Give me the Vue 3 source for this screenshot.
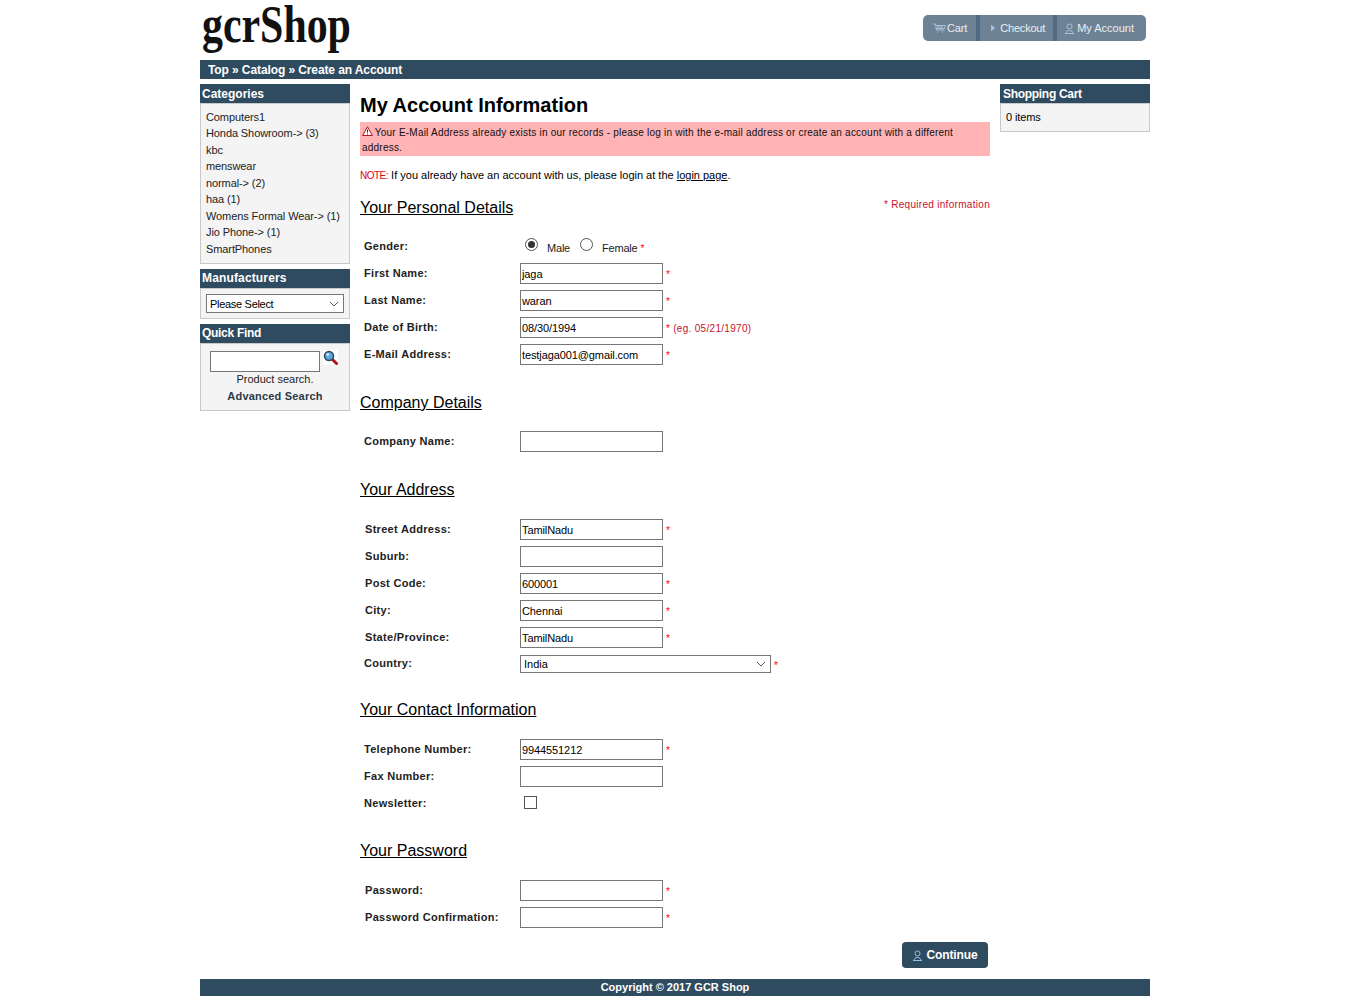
<template>
  <div class="page">
    <header class="top">
      <a class="logo"><span>gcrShop</span></a>
      <nav class="topnav">
        <a class="topnav-item cart-link">
          <svg width="13" height="10" viewBox="0 0 13 10" fill="none" stroke="#a9c3d6" stroke-width="1"><path d="M0 1h2.5l1 6h8M3 2.5h9.5l-1 3H3.5M5 2.5v3M7 2.5v3M9 2.5v3"/><path d="M4 9h1M9 9h1"/></svg>
          Cart
        </a>
        <a class="topnav-item checkout-link">
          <svg width="8" height="10" viewBox="0 0 8 10"><path d="M2 1.5l4 3.5-4 3.5z" fill="#a9c3d6"/></svg>
          Checkout
        </a>
        <a class="topnav-item account-link">
          <svg width="11" height="11" viewBox="0 0 11 11" fill="none" stroke="#a9c3d6"><circle cx="5.5" cy="3.5" r="2.5"/><path d="M1 10.5h9M2 10.5c0-2 1.5-3 3.5-3s3.5 1 3.5 3"/></svg>
          My Account
        </a>
      </nav>
    </header>

    <div class="crumbs">Top » Catalog » Create an Account</div>

    <div class="columns">
      <aside class="side">
        <section class="box">
          <h3 class="box-title">Categories</h3>
          <ul class="box-body cats">
            <li v-for="c in categories" :key="c">{{ c }}</li>
          </ul>
        </section>
        <section class="box">
          <h3 class="box-title wide raised">Manufacturers</h3>
          <div class="box-body manu">
            <select class="select manu-select"><option>Please Select</option></select>
          </div>
        </section>
        <section class="box">
          <h3 class="box-title tight raised">Quick Find</h3>
          <div class="box-body find">
            <div class="find-row">
              <input class="find-input" type="text" />
              <svg class="find-icon" width="15" height="15" viewBox="0 0 15 15">
                <path d="M9 9l4.5 4.5" stroke="#b3121d" stroke-width="3" stroke-linecap="round"/>
                <circle cx="6" cy="6" r="4.5" fill="#5aa5e0" stroke="#33475b" stroke-width="1.5"/>
                <circle cx="4.8" cy="4.6" r="1.4" fill="#d7edfb"/>
              </svg>
            </div>
            <div class="find-text">Product search.</div>
            <div class="adv">Advanced Search</div>
          </div>
        </section>
      </aside>

      <main class="main">
        <h1 class="title">My Account Information</h1>
        <div class="alert">
          <svg class="alert-icon" width="11" height="10" viewBox="0 0 11 10" fill="#fff" stroke="#b3121d"><path d="M5.5 .8L10.4 9.5H.6z"/><path d="M5.5 3.5v3.2M5.5 7.5v1" stroke="#333"/></svg>
          Your E-Mail Address already exists in our records - please log in with the e-mail address or create an account with a different address.
        </div>
        <p class="note"><span class="red">NOTE:</span> If you already have an account with us, please login at the <u>login page</u>.</p>

        <div class="head-row">
          <h2 class="heading">Your Personal Details</h2>
          <span class="required">* Required information</span>
        </div>
        <div class="row gender">
          <label class="lbl">Gender:</label>
          <div class="radios">
            <span class="radio on"></span><span class="radio-text">Male</span>
            <span class="radio"></span><span class="radio-text">Female <i class="star">*</i></span>
          </div>
        </div>
        <div v-for="f in personal" :key="f.label" class="row">
          <label class="lbl">{{ f.label }}</label>
          <input class="input" type="text" :value="f.value" />
          <i class="star">*</i><span v-if="f.hint" class="hint">{{ f.hint }}</span>
        </div>

        <h2 class="heading next company-head">Company Details</h2>
        <div class="row">
          <label class="lbl">Company Name:</label>
          <input class="input" type="text" />
        </div>

        <h2 class="heading next">Your Address</h2>
        <div v-for="f in address" :key="f.label" class="row shifted">
          <label class="lbl">{{ f.label }}</label>
          <input class="input" type="text" :value="f.value" />
          <i v-if="f.req" class="star">*</i>
        </div>
        <div class="row country">
          <label class="lbl">Country:</label>
          <select class="select country-select"><option>India</option></select>
          <i class="star">*</i>
        </div>

        <h2 class="heading next snug">Your Contact Information</h2>
        <div class="row">
          <label class="lbl">Telephone Number:</label>
          <input class="input" type="text" value="9944551212" />
          <i class="star">*</i>
        </div>
        <div class="row">
          <label class="lbl">Fax Number:</label>
          <input class="input" type="text" />
        </div>
        <div class="row">
          <label class="lbl">Newsletter:</label>
          <span class="check"></span>
        </div>

        <h2 class="heading next snug">Your Password</h2>
        <div class="row shifted">
          <label class="lbl">Password:</label>
          <input class="input" type="password" />
          <i class="star">*</i>
        </div>
        <div class="row shifted">
          <label class="lbl">Password Confirmation:</label>
          <input class="input" type="password" />
          <i class="star">*</i>
        </div>

        <div class="actions">
          <button class="continue" type="button">
            <svg width="11" height="11" viewBox="0 0 11 11" fill="none" stroke="#8fc3ea"><circle cx="5.5" cy="3.5" r="2.5"/><path d="M1 10.5h9M2 10.5c0-2 1.5-3 3.5-3s3.5 1 3.5 3"/></svg>
            Continue
          </button>
        </div>
      </main>

      <aside class="side">
        <section class="box">
          <h3 class="box-title tight cart-title">Shopping Cart</h3>
          <div class="box-body cart">0 items</div>
        </section>
      </aside>
    </div>

    <footer class="foot">Copyright © 2017 GCR Shop</footer>
  </div>
</template>

<script setup>
const categories = [
  'Computers1',
  'Honda Showroom-> (3)',
  'kbc',
  'menswear',
  'normal-> (2)',
  'haa (1)',
  'Womens Formal Wear-> (1)',
  'Jio Phone-> (1)',
  'SmartPhones',
]

const personal = [
  { label: 'First Name:', value: 'jaga' },
  { label: 'Last Name:', value: 'waran' },
  { label: 'Date of Birth:', value: '08/30/1994', hint: '(eg. 05/21/1970)' },
  { label: 'E-Mail Address:', value: 'testjaga001@gmail.com' },
]

const address = [
  { label: 'Street Address:', value: 'TamilNadu', req: true },
  { label: 'Suburb:', value: '' },
  { label: 'Post Code:', value: '600001', req: true },
  { label: 'City:', value: 'Chennai', req: true },
  { label: 'State/Province:', value: 'TamilNadu', req: true },
]
</script>

<style>
html, body { background: #fff; }
</style>

<style scoped>
.page {
  width: 950px;
  margin-left: 200px;
  font-family: "Liberation Sans", Arial, sans-serif;
  font-size: 11px;
  color: #000;
  letter-spacing: 0.3px;
}

/* header */
.top {
  height: 60px;
  display: flex;
  justify-content: space-between;
  align-items: flex-start;
}
.logo {
  display: block;
  width: 200px;
  height: 60px;
}
.logo span {
  display: block;
  font-family: "Liberation Serif", serif;
  font-size: 53px;
  font-weight: bold;
  line-height: 48px;
  letter-spacing: 0;
  transform: scaleX(0.79);
  transform-origin: 0 0;
  white-space: nowrap;
  color: #111;
  margin-left: 2px;
}
.topnav {
  display: flex;
  margin: 15px 4px 0 0;
  height: 26px;
  background: #6d8294;
  border-radius: 5px;
  overflow: hidden;
  letter-spacing: -0.1px;
}
.topnav-item {
  display: flex;
  align-items: center;
  color: #e8eef2;
}
.cart-link { padding: 0 9px 0 10px; gap: 1px; }
.checkout-link { padding: 0 8px 0 9px; gap: 3px; border-left: 4px solid #4f6b82; letter-spacing: -0.2px; }
.account-link { padding: 0 12px 0 7px; gap: 2px; border-left: 4px solid #4f6b82; letter-spacing: 0; }

.crumbs {
  height: 19px;
  line-height: 20px;
  background: #2f4b60;
  color: #fff;
  font-size: 12px;
  font-weight: bold;
  letter-spacing: -0.1px;
  padding-left: 8px;
}

.columns {
  display: flex;
  gap: 10px;
  margin-top: 5px;
  align-items: flex-start;
}
.side { width: 150px; flex: none; }
.box { margin-bottom: 5px; }
.box-title {
  margin: 0;
  height: 19px;
  line-height: 20px;
  padding-left: 2px;
  background: #2f4b60;
  color: #fff;
  font-size: 12px;
  font-weight: bold;
  letter-spacing: 0;
}
.box-title.raised { line-height: 18px; }
.box-title.wide { letter-spacing: 0.15px; }
.box-title.tight { letter-spacing: -0.3px; }
.cart-title { padding-left: 3px; }
.box-body {
  background: #f4f4f4;
  border: 1px solid #c9c9c9;
}
.cats {
  list-style: none;
  margin: 0;
  padding: 4.75px 5px 5.75px;
  color: #222;
  line-height: 16.5px;
  letter-spacing: -0.1px;
}
.manu { padding: 5px; height: 31px; box-sizing: border-box; }
.select {
  appearance: none;
  box-sizing: border-box;
  border: 1px solid #767676;
  background: #fff url("data:image/svg+xml,%3Csvg xmlns='http://www.w3.org/2000/svg' width='10' height='6'%3E%3Cpath d='M1 1l4 4 4-4' fill='none' stroke='%23555'/%3E%3C/svg%3E") no-repeat right 4px center;
  font: 11px "Liberation Sans", Arial, sans-serif;
  padding: 0 3px;
  color: #000;
}
.manu-select { width: 138px; height: 19px; letter-spacing: -0.3px; }
.find {
  text-align: center;
  padding: 7px 0;
  height: 68px;
  box-sizing: border-box;
  color: #222;
}
.find-row {
  display: flex;
  align-items: flex-start;
  gap: 3px;
  height: 21px;
  padding-left: 9px;
}
.find-icon { margin-top: -1px; background: #fff; }
.find-input {
  width: 110px;
  height: 21px;
  box-sizing: border-box;
  border: 1px solid #767676;
  padding: 0;
}
.find-text { letter-spacing: 0; margin-top: 1px; }
.adv { margin-top: 5px; font-weight: bold; font-size: 11px; color: #2b3a48; letter-spacing: 0.2px; }
.cart { padding: 7px 5px; height: 29px; box-sizing: border-box; letter-spacing: -0.1px; }

/* main column */
.main { width: 630px; flex: none; }
.title {
  margin: 0;
  font-size: 20px;
  box-sizing: border-box;
  padding-top: 4px;
  line-height: 34px;
  height: 38px;
  letter-spacing: 0;
}
.alert {
  background: #ffb3b5;
  padding: 3px 2px 0;
  height: 34px;
  box-sizing: border-box;
  font-size: 10px;
  letter-spacing: 0.22px;
  line-height: 15px;
  color: #111;
}
.alert-icon { margin-right: -1px; }
.note { margin: 12px 0 0; line-height: 14px; letter-spacing: 0; }
.red { color: #e00012; font-size: 10px; letter-spacing: -0.5px; }
.head-row {
  display: flex;
  justify-content: space-between;
  margin-top: 15px;
}
.required { color: #c8102e; font-size: 10px; margin-top: 1px; }
.heading {
  margin: 0;
  font-size: 16px;
  font-weight: normal;
  line-height: 20px;
  text-decoration: underline;
  letter-spacing: 0;
}
.heading.next { margin-top: 28px; margin-bottom: 19px; }
.heading.snug { margin-top: 27px; }
.heading.company-head { margin-bottom: 18px; }
.row {
  display: flex;
  align-items: center;
  height: 21px;
  margin-bottom: 6px;
}
.lbl {
  width: 156px;
  padding-left: 4px;
  margin-bottom: 2px;
  font-weight: bold;
  color: #222;
  flex: none;
}
.shifted .lbl { padding-left: 5px; width: 155px; }
.input {
  width: 143px;
  height: 21px;
  box-sizing: border-box;
  border: 1px solid #767676;
  padding: 0 1px;
  font: 11px "Liberation Sans", Arial, sans-serif;
  letter-spacing: -0.1px;
  color: #000;
  background: #fff;
  flex: none;
}
.star { color: #f00; font-style: normal; margin-left: 3px; padding-top: 2px; font-size: 10px; }
.hint { color: #c8102e; margin-left: 3px; padding-top: 2px; font-size: 10px; }
.gender { margin-top: 18px; }
.radios { display: flex; align-items: center; padding-left: 5px; margin-bottom: 4px; }
.radio {
  width: 13px;
  height: 13px;
  box-sizing: border-box;
  border: 1px solid #555;
  border-radius: 50%;
  background: #fff;
  position: relative;
}
.radio.on::after {
  content: "";
  position: absolute;
  inset: 2px;
  border-radius: 50%;
  background: #333;
}
.radio-text { margin: 7px 10px 0 9px; color: #222; letter-spacing: -0.2px; }
.radio-text .star { margin-left: 0; }
.country { height: 18px; margin-top: 7px; margin-bottom: 0; }
.country-select { width: 251px; height: 18px; }
.check {
  width: 13px;
  height: 13px;
  box-sizing: border-box;
  border: 1px solid #555;
  margin: 0 0 2px 4px;
}
.actions {
  display: flex;
  justify-content: flex-end;
  padding-right: 2px;
  margin-top: 14px;
}
.continue {
  display: flex;
  align-items: center;
  gap: 3px;
  height: 26px;
  width: 86px;
  justify-content: center;
  background: #2f4b60;
  color: #fff;
  border: 0;
  border-radius: 4px;
  font: bold 12px "Liberation Sans", Arial, sans-serif;
  letter-spacing: -0.1px;
}
.foot {
  margin-top: 11px;
  height: 17px;
  line-height: 17px;
  background: #2f4b60;
  color: #fff;
  font-weight: bold;
  letter-spacing: 0;
  text-align: center;
}
</style>
